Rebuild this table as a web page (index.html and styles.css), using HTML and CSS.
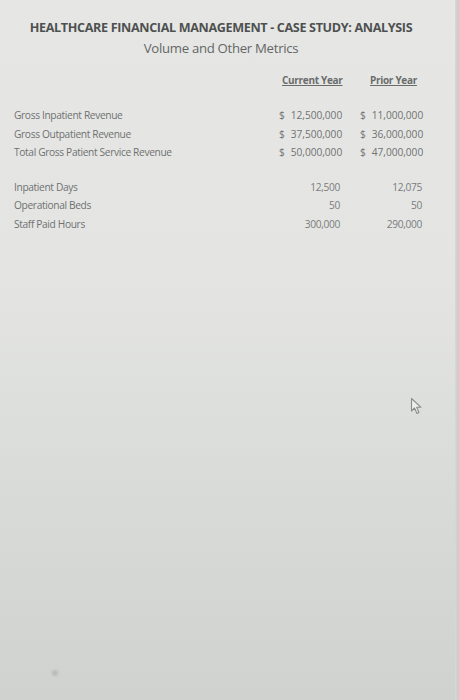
FILE: index.html
```html
<!DOCTYPE html>
<html>
<head>
<meta charset="utf-8">
<link rel="stylesheet" href="styles.css">
</head>
<body>
<div class="page">
  <header class="head">
    <h1 class="title">HEALTHCARE FINANCIAL MANAGEMENT - CASE STUDY: ANALYSIS</h1>
    <h2 class="subtitle">Volume and Other Metrics</h2>
  </header>
  <div class="table">
    <div class="colhead">
      <span class="hcell cur">Current Year</span>
      <span class="hcell prior">Prior Year</span>
    </div>
    <div class="group">
      <div class="row"><span class="label">Gross Inpatient Revenue</span><span class="money"><i>$</i><b>12,500,000</b></span><span class="money"><i>$</i><b>11,000,000</b></span></div>
      <div class="row"><span class="label">Gross Outpatient Revenue</span><span class="money"><i>$</i><b>37,500,000</b></span><span class="money"><i>$</i><b>36,000,000</b></span></div>
      <div class="row"><span class="label">Total Gross Patient Service Revenue</span><span class="money"><i>$</i><b>50,000,000</b></span><span class="money"><i>$</i><b>47,000,000</b></span></div>
    </div>
    <div class="group g2">
      <div class="row"><span class="label">Inpatient Days</span><span class="num">12,500</span><span class="num">12,075</span></div>
      <div class="row"><span class="label">Operational Beds</span><span class="num">50</span><span class="num">50</span></div>
      <div class="row"><span class="label">Staff Paid Hours</span><span class="num">300,000</span><span class="num">290,000</span></div>
    </div>
  </div>
</div>
<svg class="cursor" width="14" height="18" viewBox="0 0 14 18"><path d="M1.5 1.5 L1.5 14 L4.5 11 L7 16.5 L9 15.5 L6.7 10.3 L11 10.3 Z" fill="#eceeec" stroke="#8a8c8c" stroke-width="1.1" stroke-linejoin="round"/></svg>
<span class="dot"></span>
<span class="edge"></span>
</body>
</html>
```
FILE: styles.css
```css
html, body { margin: 0; padding: 0; }
body {
  width: 459px;
  height: 700px;
  overflow: hidden;
  position: relative;
  font-family: "Open Sans", "Liberation Sans", sans-serif;
  background: linear-gradient(180deg, #e6e7e5 0%, #e4e5e3 40%, #d9dbd9 70%, #d0d2d0 100%);
  color: #666;
}
.page { padding: 20px 0 0 0; }
.head { width: 442px; text-align: center; }
.title {
  margin: 0;
  font-size: 12.6px;
  font-weight: 700;
  color: #4e5050;
  letter-spacing: -0.35px;
  line-height: 16px;
}
.subtitle {
  margin: 4px 0 0 0;
  font-size: 13.2px;
  font-weight: 400;
  color: #646666;
  letter-spacing: -0.3px;
  line-height: 16px;
}
.table { padding-left: 14px; margin-top: 14px; }
.colhead, .row {
  display: grid;
  grid-template-columns: 264px 66px 80px;
  align-items: center;
}
.colhead { height: 20px; }
.hcell {
  font-size: 10px;
  font-weight: 700;
  color: #6a6c6c;
  text-decoration: underline;
  letter-spacing: -0.3px;
}
.hcell.cur { grid-column: 2; justify-self: start; padding-left: 4px; }
.hcell.prior { grid-column: 3; justify-self: start; padding-left: 26px; }
.group { margin-top: 16px; }
.group.g2 { margin-top: 16px; }
.row { height: 18.5px; font-size: 10.2px; letter-spacing: -0.35px; }
.label { color: #6f7171; white-space: nowrap; }
.money { display: flex; gap: 6px; color: #707272; white-space: nowrap; letter-spacing: -0.05px; padding-left: 1px; }
.money i { font-style: normal; font-weight: 400; }
.money b { font-weight: 400; }
.row .money:last-child { padding-left: 16px; }
.num { text-align: right; color: #7a7c7c; }
.row .num:nth-child(2) { padding-right: 4px; }
.row .num:last-child { padding-right: 2px; }
.cursor { position: absolute; left: 410px; top: 397px; }
.dot {
  position: absolute; left: 52px; top: 670px;
  width: 6px; height: 6px; border-radius: 50%;
  background: #b9bbbb; filter: blur(1px);
}
.edge {
  position: absolute; right: 0; top: 0; width: 4px; height: 700px;
  background: linear-gradient(90deg, #d8d9d7, #c9cbc9);
}
```
